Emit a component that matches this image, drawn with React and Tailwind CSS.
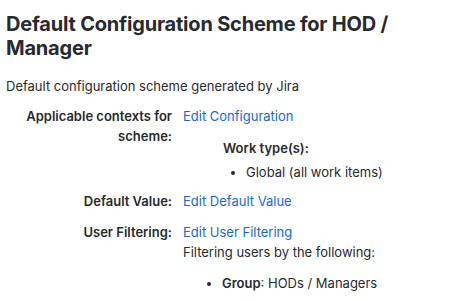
import React from 'react';

const Row = ({ label, children, className = '' }) => (
  <div className={`flex ${className}`}>
    <div className="w-[166px] shrink-0 pl-[16px] text-right font-semibold">{label}</div>
    <div className="ml-[11px] flex-1">{children}</div>
  </div>
);

const Link = ({ children }) => (
  <a href="#" className="text-[#1868db] hover:underline">{children}</a>
);

export default function App() {
  return (
    <div
      className="min-h-[301px] w-[452px] bg-white px-[6px] pt-[12px] text-[13px] leading-[20px] text-[#292a2e]"
      style={{ fontFamily: 'Inter, "Noto Sans", sans-serif' }}
    >
      <h1 className="text-[20px] font-bold leading-[24px] tracking-[-0.2px]">
        Default Configuration Scheme for HOD / Manager
      </h1>
      <p className="mt-[16px]">Default configuration scheme generated by Jira</p>

      <div className="mt-[10px] flex flex-col">
        <Row label="Applicable contexts for scheme:">
          <Link>Edit Configuration</Link>
          <div className="ml-[40px] mt-[12px] font-semibold">Work type(s):</div>
          <ul className="ml-[50px] mt-[4px] list-disc pl-[13px]">
            <li>Global (all work items)</li>
          </ul>
        </Row>
        <Row label="Default Value:" className="mt-[9px]">
          <Link>Edit Default Value</Link>
        </Row>
        <Row label="User Filtering:" className="mt-[11px]">
          <Link>Edit User Filtering</Link>
          <div>Filtering users by the following:</div>
          <ul className="ml-[25px] mt-[11px] list-disc pl-[14px]">
            <li>
              <span className="font-semibold">Group</span>: HODs / Managers
            </li>
          </ul>
        </Row>
      </div>
    </div>
  );
}
